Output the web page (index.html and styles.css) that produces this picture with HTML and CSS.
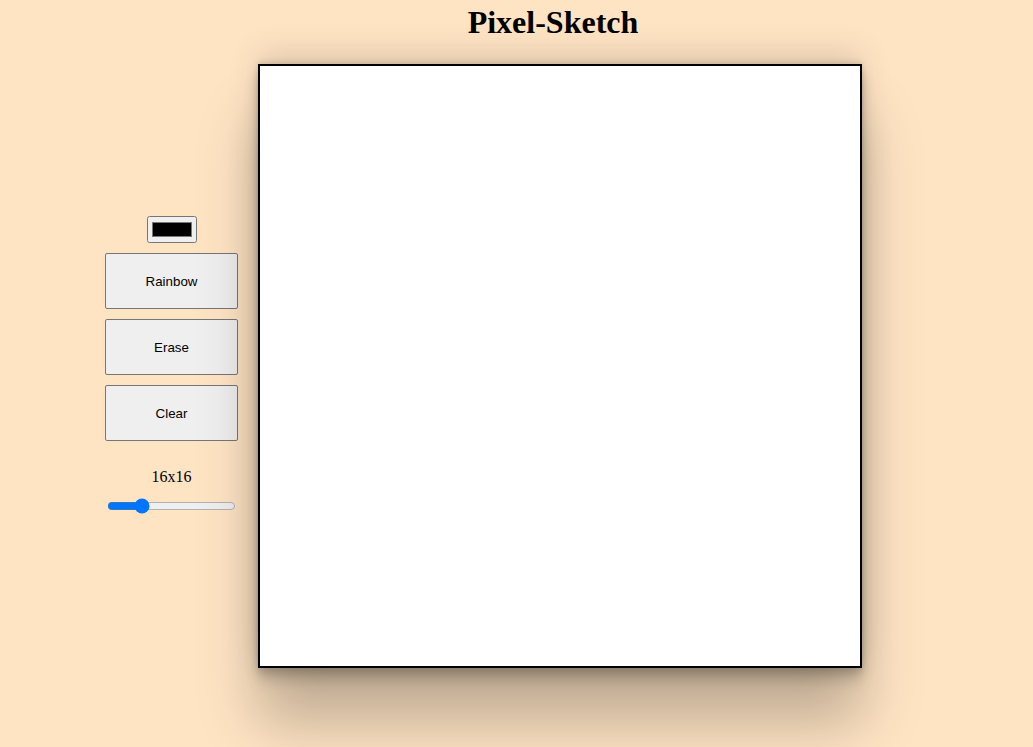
FILE: index.html
```html
<!DOCTYPE html>
<html>
<head>
<meta charset="utf-8">
<title>Pixel-Sketch</title>
<link rel="stylesheet" href="styles.css">
</head>
<body>
<h1 class="title">Pixel-Sketch</h1>
<main class="layout">
  <div class="controls">
    <input class="color" type="color" value="#000000">
    <button class="btn">Rainbow</button>
    <button class="btn">Erase</button>
    <button class="btn">Clear</button>
    <div class="size-label">16x16</div>
    <input class="slider" type="range" min="1" max="64" value="16">
  </div>
  <div class="canvas"></div>
</main>
</body>
</html>
```
FILE: styles.css
```css
html, body {
  margin: 0;
  padding: 0;
}
body {
  background: #ffe4c4;
  font-family: "Liberation Serif", "Times New Roman", serif;
  height: 747px;
  overflow: hidden;
}
.title {
  margin: 0;
  padding: 4px 0 0 73px;
  text-align: center;
  font-size: 32px;
  font-weight: bold;
  line-height: 37px;
}
.layout {
  display: flex;
  align-items: center;
  gap: 20px;
  padding-left: 105px;
  margin-top: 23px;
}
.controls {
  display: flex;
  flex-direction: column;
  align-items: center;
  gap: 10px;
  width: 133px;
}
.color {
  width: 50px;
  height: 27px;
  margin: 0;
}
.btn {
  width: 133px;
  height: 56px;
  margin: 0;
  font-family: "Liberation Sans", Arial, sans-serif;
  font-size: 13.333px;
  color: #000;
  background: #efefef;
  border: 1px solid #767676;
  border-radius: 2px;
}
.size-label {
  margin-top: 17px;
  font-size: 16px;
  line-height: 18px;
}
.slider {
  width: 129px;
  margin: 2px;
}
.canvas {
  width: 600px;
  height: 600px;
  background: #fff;
  border: 2px solid #000;
  box-shadow: rgba(0, 0, 0, 0.25) 0px 54px 55px,
              rgba(0, 0, 0, 0.12) 0px -12px 30px,
              rgba(0, 0, 0, 0.12) 0px 4px 6px,
              rgba(0, 0, 0, 0.17) 0px 12px 13px,
              rgba(0, 0, 0, 0.09) 0px -3px 5px;
  flex: none;
}
```
